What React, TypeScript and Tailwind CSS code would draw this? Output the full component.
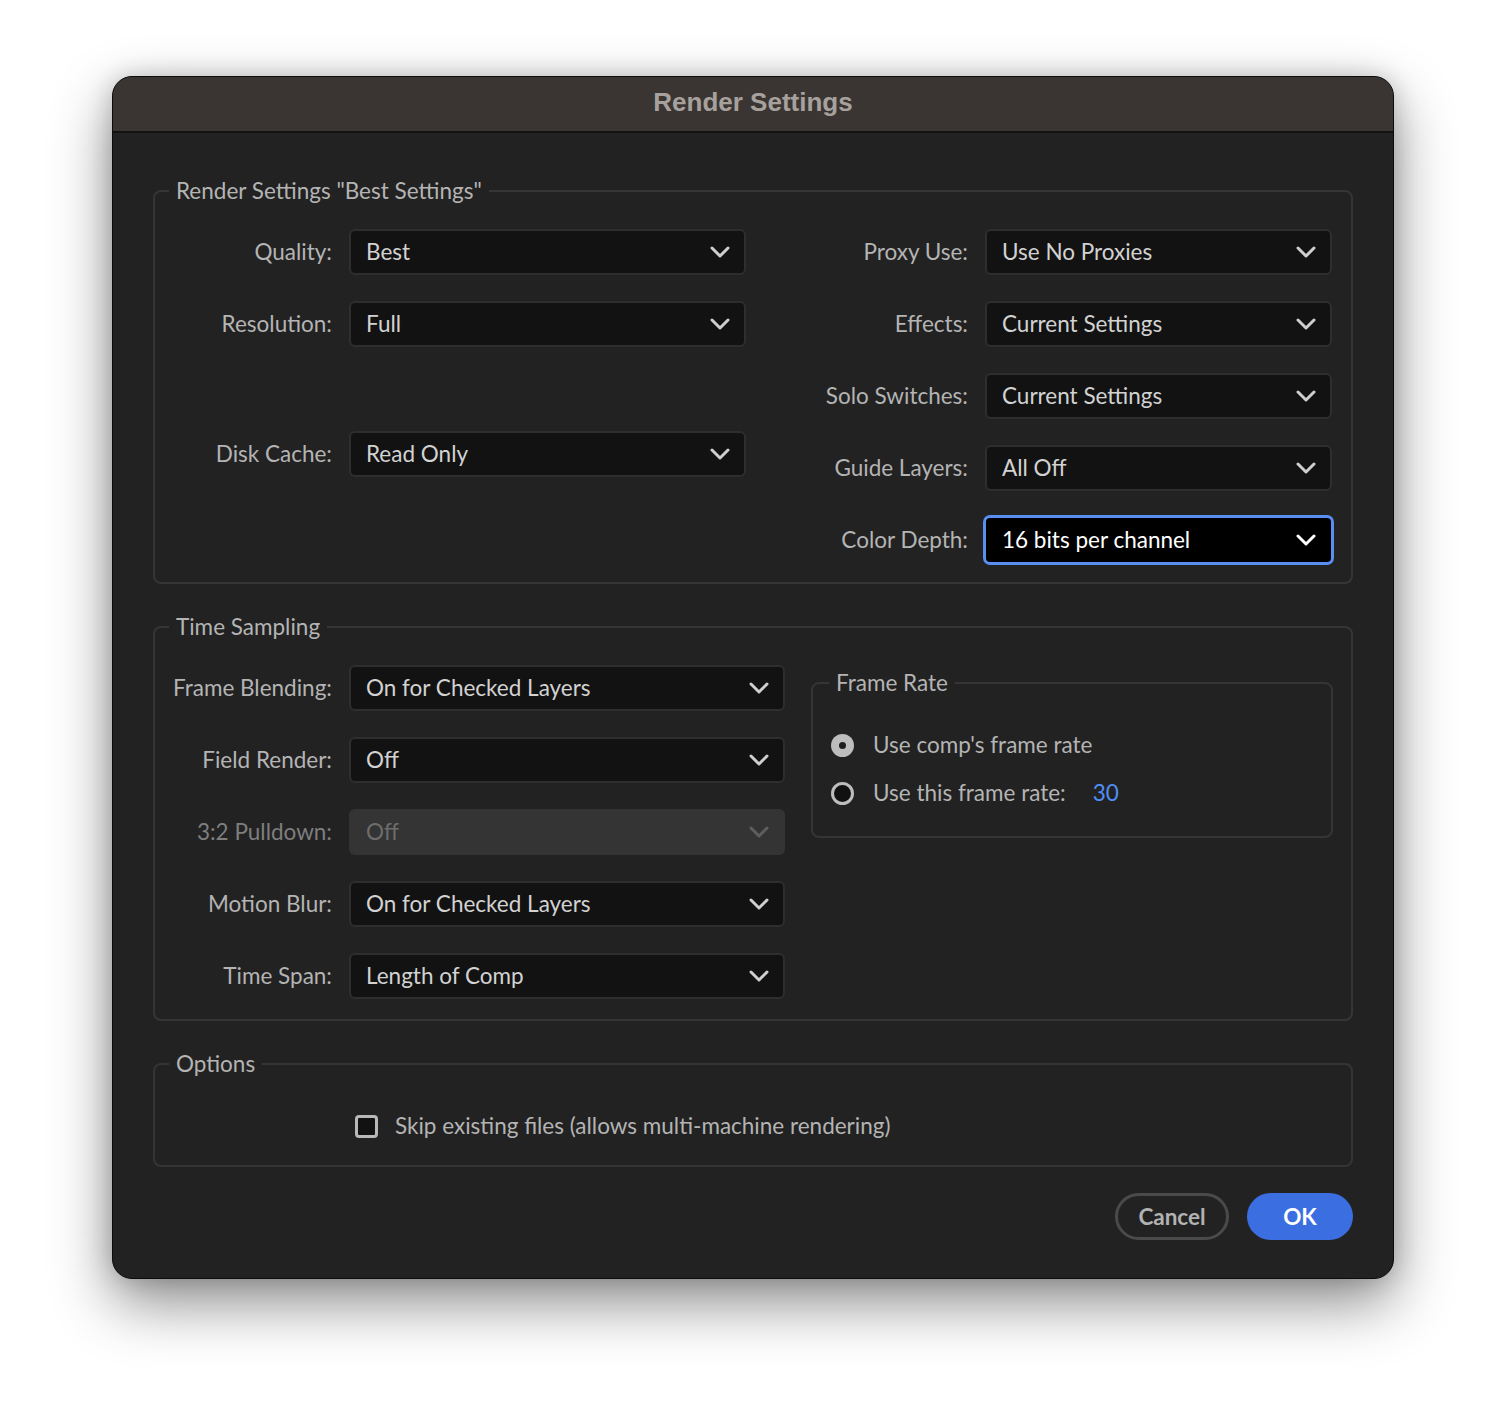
import React from 'react';

const font = { fontFamily: 'Lato, "Noto Sans", sans-serif' };

function Chevron({ color = '#cfcfcf' }: { color?: string }) {
  return (
    <svg width="20" height="12" viewBox="0 0 20 12" fill="none" className="shrink-0">
      <path d="M2 2 L10 10 L18 2" stroke={color} strokeWidth="3" strokeLinecap="round" strokeLinejoin="round" />
    </svg>
  );
}

type SelectProps = {
  value: string;
  width: string;
  focused?: boolean;
  disabled?: boolean;
};

function Select({ value, width, focused, disabled }: SelectProps) {
  if (focused) {
    return (
      <div className={`${width} h-[50px] -mx-[2px] -my-[2px] flex items-center justify-between pl-[16px] pr-[15px] rounded-[7px] bg-black border-[3px] border-[#5a8ef0]`}>
        <span className="text-white">{value}</span>
        <Chevron color="#ffffff" />
      </div>
    );
  }
  if (disabled) {
    return (
      <div className={`${width} h-[46px] flex items-center justify-between pl-[17px] pr-[16px] rounded-[6px] bg-[#343434]`}>
        <span className="text-[#6c6c6c]">{value}</span>
        <Chevron color="#5e5e5e" />
      </div>
    );
  }
  return (
    <div className={`${width} h-[46px] flex items-center justify-between pl-[15px] pr-[14px] rounded-[6px] bg-[#121212] border-2 border-[#2e2e2e]`}>
      <span className="text-[#d2d2d2]">{value}</span>
      <Chevron />
    </div>
  );
}

function Row({
  label,
  labelW,
  children,
  disabled,
  className = '',
}: {
  label: string;
  labelW: string;
  children: React.ReactNode;
  disabled?: boolean;
  className?: string;
}) {
  return (
    <div className={`flex items-center gap-[17px] ${className}`}>
      <div className={`${labelW} text-right whitespace-nowrap ${disabled ? 'text-[#7e7e7e]' : 'text-[#b4b4b4]'}`}>{label}</div>
      {children}
    </div>
  );
}

function Group({
  title,
  children,
  className = '',
}: {
  title: string;
  children: React.ReactNode;
  className?: string;
}) {
  return (
    <fieldset className={`border-2 border-[#353535] rounded-[8px] pl-[14px] ${className}`}>
      <legend className="px-[7px] leading-[28px] text-[#b4b4b4]">{title}</legend>
      {children}
    </fieldset>
  );
}

function Radio({ checked }: { checked?: boolean }) {
  if (checked) {
    return (
      <div className="w-[23px] h-[23px] rounded-full bg-[#bdbdbd] flex items-center justify-center">
        <div className="w-[7px] h-[7px] rounded-full bg-[#1e1e1e]" />
      </div>
    );
  }
  return <div className="w-[23px] h-[23px] rounded-full border-[3px] border-[#bdbdbd] bg-[#111]" />;
}

export default function App() {
  return (
    <div className="min-h-[1428px] bg-white pt-[76px] pl-[112px]" style={font}>
      <div className="w-[1282px] h-[1203px] rounded-[20px] overflow-hidden border-[1.5px] border-[#0c0c0c] bg-[#222222] shadow-[0_24px_60px_rgba(0,0,0,0.45),0_0_24px_rgba(0,0,0,0.18)] flex flex-col">
        <div className="h-[56px] shrink-0 bg-[#3a3532] border-b-2 border-[#121212] flex items-center justify-center pb-[3px]">
          <span
            className="text-[26px] font-bold text-[#a7a19d]"
            style={{ fontFamily: '"Liberation Sans", Arial, sans-serif' }}
          >
            Render Settings
          </span>
        </div>

        <div className="flex-1 px-[40px] pt-[44px] text-[22.5px]">
          <Group title={'Render Settings "Best Settings"'} className="pb-[19px]">
            <div className="flex pt-[24px] pr-[19px]">
              <div className="flex flex-col gap-[26px]">
                <Row label="Quality:" labelW="w-[163px]">
                  <Select value="Best" width="w-[397px]" />
                </Row>
                <Row label="Resolution:" labelW="w-[163px]">
                  <Select value="Full" width="w-[397px]" />
                </Row>
                <Row label="Disk Cache:" labelW="w-[163px]" className="mt-[58px]">
                  <Select value="Read Only" width="w-[397px]" />
                </Row>
              </div>
              <div className="ml-auto flex flex-col gap-[26px]">
                <Row label="Proxy Use:" labelW="w-[200px]">
                  <Select value="Use No Proxies" width="w-[347px]" />
                </Row>
                <Row label="Effects:" labelW="w-[200px]">
                  <Select value="Current Settings" width="w-[347px]" />
                </Row>
                <Row label="Solo Switches:" labelW="w-[200px]">
                  <Select value="Current Settings" width="w-[347px]" />
                </Row>
                <Row label="Guide Layers:" labelW="w-[200px]">
                  <Select value="All Off" width="w-[347px]" />
                </Row>
                <Row label="Color Depth:" labelW="w-[200px]">
                  <Select value="16 bits per channel" width="w-[351px]" focused />
                </Row>
              </div>
            </div>
          </Group>

          <Group title="Time Sampling" className="mt-[29px] pb-[20px]">
            <div className="flex pt-[24px] pr-[18px]">
              <div className="flex flex-col gap-[26px]">
                <Row label="Frame Blending:" labelW="w-[163px]">
                  <Select value="On for Checked Layers" width="w-[436px]" />
                </Row>
                <Row label="Field Render:" labelW="w-[163px]">
                  <Select value="Off" width="w-[436px]" />
                </Row>
                <Row label="3:2 Pulldown:" labelW="w-[163px]" disabled>
                  <Select value="Off" width="w-[436px]" disabled />
                </Row>
                <Row label="Motion Blur:" labelW="w-[163px]">
                  <Select value="On for Checked Layers" width="w-[436px]" />
                </Row>
                <Row label="Time Span:" labelW="w-[163px]">
                  <Select value="Length of Comp" width="w-[436px]" />
                </Row>
              </div>
              <div className="ml-[26px] flex-1 self-start mt-[4px]">
                <Group title="Frame Rate" className="pl-[16px] pb-[29px]">
                  <div className="pt-[34px] pl-[2px] flex flex-col gap-[20px]">
                    <div className="flex items-center gap-[19px] h-[28px]">
                      <Radio checked />
                      <span className="text-[#b4b4b4]">Use comp's frame rate</span>
                    </div>
                    <div className="flex items-center gap-[19px] h-[28px]">
                      <Radio />
                      <span className="text-[#b4b4b4]">Use this frame rate:</span>
                      <span className="ml-[8px] text-[#4f8ef5]">30</span>
                    </div>
                  </div>
                </Group>
              </div>
            </div>
          </Group>

          <Group title="Options" className="mt-[29px] pb-[25px]">
            <div className="pt-[34px] pl-[186px] flex items-center gap-[17px] h-[28px] box-content">
              <div className="w-[23px] h-[23px] rounded-[4px] border-[3px] border-[#b8b8b8] bg-[#121212]" />
              <span className="text-[#b4b4b4]">Skip existing files (allows multi-machine rendering)</span>
            </div>
          </Group>

          <div className="mt-[26px] flex justify-end gap-[18px]">
            <button className="w-[114px] h-[47px] rounded-full border-[3px] border-[#4a4a4a] text-[#b2b2b2] font-bold">
              Cancel
            </button>
            <button className="w-[106px] h-[47px] rounded-full bg-[#3b6ee0] text-white font-bold">
              OK
            </button>
          </div>
        </div>
      </div>
    </div>
  );
}
